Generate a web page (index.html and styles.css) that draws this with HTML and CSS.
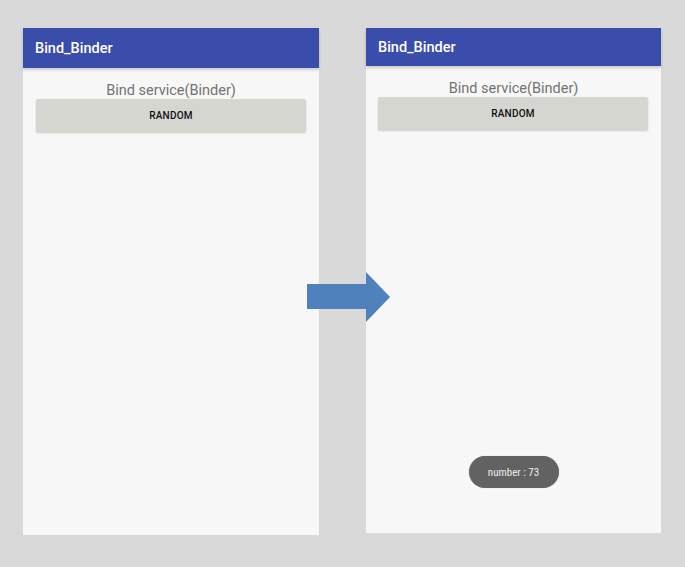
FILE: index.html
```html
<!DOCTYPE html>
<html>
<head>
<meta charset="utf-8">
<link rel="stylesheet" href="styles.css">
</head>
<body>
<div class="stage">
  <div class="phone phone-left">
    <div class="appbar">Bind_Binder</div>
    <div class="content">
      <div class="label">Bind service(Binder)</div>
      <div class="btn">RANDOM</div>
    </div>
  </div>
  <div class="phone phone-right">
    <div class="appbar">Bind_Binder</div>
    <div class="content">
      <div class="label">Bind service(Binder)</div>
      <div class="btn">RANDOM</div>
      <div class="toast">number : 73</div>
    </div>
  </div>
  <svg class="arrow" width="84" height="50" viewBox="0 0 84 50">
    <polygon points="0,12 59,12 59,0 83,25 59,50 59,37 0,37" fill="#4f81bd"/>
  </svg>
</div>
</body>
</html>
```
FILE: styles.css
```css
html, body {
  margin: 0;
  padding: 0;
  background: #d9d9d9;
  width: 685px;
  height: 567px;
  overflow: hidden;
  font-family: Roboto, "Liberation Sans", sans-serif;
}
.stage {
  position: relative;
  display: flex;
  gap: 47px;
  padding: 28px 0 0 23px;
}
.phone {
  background: #f7f7f7;
  display: flex;
  flex-direction: column;
}
.phone-left { width: 296px; height: 507px; }
.phone-right { width: 295px; height: 505px; }
.appbar {
  background: #3a4dab;
  color: #fff;
  font-size: 14.5px;
  font-weight: 500;
  padding-left: 12px;
  display: flex;
  align-items: center;
  height: 40px;
  box-shadow: 0 2px 3px rgba(0,0,0,0.18);
  position: relative;
  z-index: 1;
}
.phone-right .appbar { height: 38px; }
.content {
  flex: 1;
  display: flex;
  flex-direction: column;
  align-items: center;
  padding: 0 13px 0 13px;
}
.label {
  color: #737373;
  font-size: 14.5px;
  margin-top: 14px;
  line-height: 18px;
}
.btn {
  align-self: stretch;
  margin-top: -1px;
  height: 33px;
  background: #d5d6d0;
  border-radius: 2px;
  box-shadow: 0 1px 2px rgba(0,0,0,0.18);
  display: flex;
  align-items: center;
  justify-content: center;
  font-size: 10px;
  font-weight: 500;
  color: #111;
  letter-spacing: 0.2px;
}
.phone-right .btn { margin-left: -1px; margin-right: 0; }
.toast {
  margin-top: auto;
  margin-bottom: 45px;
  width: 90px;
  height: 32px;
  border-radius: 16px;
  background: #626262;
  color: #eee;
  font-size: 11px;
  font-stretch: condensed;
  display: flex;
  align-items: center;
  justify-content: center;
  box-shadow: 0 0 1px rgba(0,0,0,0.3);
}
.arrow {
  position: absolute;
  left: 307px;
  top: 272px;
}
```
